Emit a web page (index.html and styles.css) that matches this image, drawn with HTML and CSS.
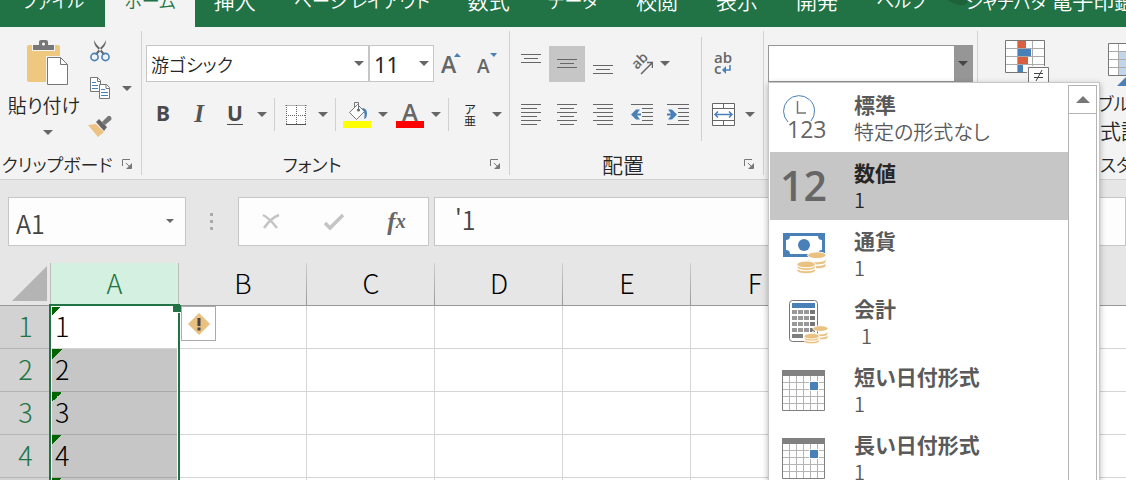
FILE: index.html
```html
<!DOCTYPE html>
<html lang="ja">
<head>
<meta charset="utf-8">
<meta name="viewport" content="width=device-width, initial-scale=1">
<title>Excel</title>
<link rel="stylesheet" href="styles.css">
</head>
<body>
<svg class="defs" aria-hidden="true">
  <symbol id="caret" viewBox="0 0 10 5"><path d="M0 0h10L5 5z" fill="currentColor"/></symbol>
  <symbol id="launcher" viewBox="0 0 10 10"><path d="M.5 7V.5H8M4 4l5 5M9.500 4.500v5h-5" fill="none" stroke="#777"/><path d="M9 5v4H5z" fill="#777"/></symbol>
  <symbol id="coins" viewBox="0 0 30 24">
    <g fill="#e9c180" stroke="#fff" stroke-width="1">
      <path d="M11 15v-4c0 5 19 5 19 0v4c0 4-19 4-19 0zM11 11V7c0 5 19 5 19 0v4c0 4-19 4-19 0z"/><ellipse cx="20.500" cy="4" rx="9.500" ry="3.500"/>
      <path d="M0 20v-4c0 5 19 5 19 0v4c0 4-19 4-19 0zM0 17v-4c0 5 19 5 19 0v4c0 4-19 4-19 0z"/><ellipse cx="9.500" cy="13.500" rx="9.500" ry="3.500"/>
    </g>
  </symbol>
  <symbol id="calendar" viewBox="0 0 44 41">
    <path d="M.5.5h42v40H.5z" fill="#fff" stroke="#808080"/>
    <path d="M7.500 5v35M14.500 5v35M21.500 5v35M28.500 5v35M35.500 5v35M1 12.500h41M1 19.500h41M1 26.500h41M1 33.500h41" stroke="#b4b4b4"/>
    <path d="M0 0h43v6H0z" fill="#808080"/><path d="M27 11h10v10H27z" fill="#fff"/><path d="M28 12h8v8h-8z" fill="#4a80b8"/>
  </symbol>
</svg>

<nav class="tabs" aria-label="リボン タブ">
  <svg class="tabs-art" viewBox="0 0 80 6" aria-hidden="true"><path d="M0 0h22c-3 6-8 6-14 4zM44 0h22c0 5-10 6-14 4z" fill="#1d623b"/></svg>
  <button class="tab kana">ファイル</button>
  <button class="tab tab-active kana">ホーム</button>
  <button class="tab">挿入</button>
  <button class="tab kana">ページ レイアウト</button>
  <button class="tab">数式</button>
  <button class="tab kana">データ</button>
  <button class="tab">校閲</button>
  <button class="tab">表示</button>
  <button class="tab">開発</button>
  <button class="tab kana">ヘルプ</button>
  <button class="tab"><span class="kana">シャチハタ</span> 電子印鑑</button>
</nav>

<div class="ribbon">
  <section class="group clipboard">
    <div class="group-body clip-body">
      <button class="paste">
        <svg class="paste-art" width="42" height="46" viewBox="0 0 42 46"><path d="M2 5h29q2 0 2 2v33q0 2-2 2H2q-2 0-2-2V7q0-2 2-2z" fill="#edc87e"/><path d="M5 4h23v7H5z" fill="#f3f3f3"/><path d="M6 5h6V2q0-2 2-2h5q2 0 2 2v3h6v5H6z" fill="#777"/><circle cx="16.500" cy="4" r="1.500" fill="#fff"/><path d="M19 16h23v30H19z" fill="#f3f3f3"/><path d="M20.500 17.500h13l7 7v20h-20z" fill="#fff" stroke="#777"/><path d="M33.500 17.500v7h7" fill="none" stroke="#777"/></svg>
        <span>貼り付け</span>
        <svg class="caret"><use href="#caret"/></svg>
      </button>
      <div class="clip-tools">
        <button class="tool" aria-label="切り取り"><svg width="20" height="22" viewBox="0 0 20 22"><path d="M4 0c0 4 1 6 5 10l4 5 2-1-5-6C7 5 5 3 4 0zM16 0c0 4-1 6-5 10l-4 5-2-1 5-6c3-3 5-5 6-8z" fill="#666"/><g fill="none" stroke="#4a80b8" stroke-width="1.600"><circle cx="4.500" cy="17" r="3.600"/><circle cx="15.500" cy="17" r="3.600"/></g></svg></button>
        <button class="tool" aria-label="コピー"><svg width="20" height="22" viewBox="0 0 20 22"><path d="M.5.5h7l3 3v11H.5z" fill="#fff" stroke="#777"/><path d="M7.500.5v4h3" fill="none" stroke="#777"/><path d="M2 5.500h4M2 8.500h6M2 11.500h6" stroke="#4a80b8"/><path d="M9.500 7.500h7l3 3v11h-10z" fill="#fff" stroke="#777"/><path d="M16 7.500v4h3.500" fill="none" stroke="#777"/><path d="M11 12.500h4M11 15.500h7M11 18.500h7" stroke="#4a80b8"/></svg></button>
        <button class="arrow" aria-label="コピーのオプション"><svg class="caret"><use href="#caret"/></svg></button>
        <button class="tool" aria-label="書式のコピー"><svg width="24" height="22" viewBox="0 0 24 22"><path d="M0 9l8-1 8 8-6 5z" fill="#edc282"/><path d="M8 6l3-3 8 8-3 4z" fill="#666"/><path d="M14 6l6-6q2-1 3 1t0 3l-6 5z" fill="#777"/></svg></button>
      </div>
    </div>
    <footer class="group-foot kana"><span>クリップボード</span><button class="launch" aria-label="クリップボードの詳細"><svg><use href="#launcher"/></svg></button></footer>
  </section>

  <section class="group font">
    <div class="group-body">
      <div class="row row-fields">
        <label class="field field-font"><select class="kana" aria-label="フォント名"><option>游ゴシック</option></select><svg class="caret"><use href="#caret"/></svg></label>
        <label class="field field-size"><select aria-label="フォント サイズ"><option>11</option></select><svg class="caret"><use href="#caret"/></svg></label>
        <button class="btn" aria-label="フォント サイズの拡大"><svg width="22" height="24" viewBox="0 0 22 24"><text x="0" y="21" class="glyph" font-size="23">A</text><path d="M13 5l3-4 4 4z" fill="#4a80b8"/></svg></button>
        <button class="btn" aria-label="フォント サイズの縮小"><svg width="22" height="24" viewBox="0 0 22 24"><text x="0" y="21" class="glyph" font-size="19">A</text><path d="M13 1h7l-3 4z" fill="#4a80b8"/></svg></button>
      </div>
      <div class="row">
        <button class="btn bold" aria-label="太字">B</button>
        <button class="btn italic" aria-label="斜体">I</button>
        <button class="btn underline" aria-label="下線">U</button>
        <button class="arrow" aria-label="下線の種類"><svg class="caret"><use href="#caret"/></svg></button>
        <i class="rule"></i>
        <button class="btn" aria-label="罫線"><svg width="22" height="22" viewBox="0 0 22 22"><path d="M1 1h20v20H1z" fill="#fff"/><path d="M.5 1.500h21M1.500 1v19M11.500 1v19M20.500 1v19M1 11.500h20" stroke="#666" stroke-dasharray="1 1"/><path d="M1 20.500h20" stroke="#555"/></svg></button>
        <button class="arrow" aria-label="罫線の種類"><svg class="caret"><use href="#caret"/></svg></button>
        <i class="rule"></i>
        <button class="btn btn-color" aria-label="塗りつぶしの色"><svg width="28" height="27" viewBox="0 0 28 27"><path d="M6.500 11.500l8-8 7 7-8 8z" fill="#fff" stroke="#777"/><path d="M11.500 7V1.500h4V9" fill="none" stroke="#777"/><circle cx="15.500" cy="9" r="1.500" fill="#666"/><path d="M20 7c4 1 5 5 3 10l-2 1c1-4 1-7-2-10z" fill="#4a80b8"/><path d="M0 20h28v7H0z" fill="#ff0"/></svg></button>
        <button class="arrow" aria-label="塗りつぶしの色の一覧"><svg class="caret"><use href="#caret"/></svg></button>
        <button class="btn btn-color" aria-label="フォントの色"><svg width="28" height="27" viewBox="0 0 28 27"><text x="14" y="20" text-anchor="middle" class="glyph" font-size="24">A</text><path d="M0 20h28v7H0z" fill="#f00"/></svg></button>
        <button class="arrow" aria-label="フォントの色の一覧"><svg class="caret"><use href="#caret"/></svg></button>
        <i class="rule"></i>
        <button class="btn phonetic" aria-label="ふりがな"><span>ア</span><span>亜</span></button>
        <button class="arrow" aria-label="ふりがなのオプション"><svg class="caret"><use href="#caret"/></svg></button>
      </div>
    </div>
    <footer class="group-foot kana"><span>フォント</span><button class="launch" aria-label="フォントの詳細"><svg><use href="#launcher"/></svg></button></footer>
  </section>

  <section class="group align">
    <div class="group-body align-body">
      <div class="align-main">
        <div class="row">
          <button class="btn" aria-label="上揃え"><svg class="lines"><path d="M1 2.500h20M4 6.500h14M1 10.500h20"/></svg></button>
          <button class="btn btn-on" aria-label="上下中央揃え" aria-pressed="true"><svg class="lines"><path d="M1 7.500h20M4 11.500h14M1 15.500h20"/></svg></button>
          <button class="btn" aria-label="下揃え"><svg class="lines"><path d="M1 13.500h20M4 17.500h14M1 21.500h20"/></svg></button>
          <button class="btn btn-gap" aria-label="方向"><svg width="22" height="22" viewBox="0 0 22 22"><text x="6" y="17" transform="rotate(-45 6 17)" class="glyph" font-size="14">ab</text><path d="M10 21L21 10M16 9.500h5.500V15" fill="none" stroke="#666" stroke-width="1.500"/></svg></button>
          <button class="arrow arrow-narrow" aria-label="方向の一覧"><svg class="caret"><use href="#caret"/></svg></button>
        </div>
        <div class="row">
          <button class="btn" aria-label="左揃え"><svg class="lines"><path d="M1 1.500h20M1 5.500h16M1 9.500h20M1 13.500h16M1 17.500h20M1 21.500h16"/></svg></button>
          <button class="btn" aria-label="中央揃え"><svg class="lines"><path d="M1 1.500h20M4 5.500h14M1 9.500h20M4 13.500h14M1 17.500h20M4 21.500h14"/></svg></button>
          <button class="btn" aria-label="右揃え"><svg class="lines"><path d="M1 1.500h20M5 5.500h16M1 9.500h20M5 13.500h16M1 17.500h20M5 21.500h16"/></svg></button>
          <button class="btn btn-gap" aria-label="インデントを減らす"><svg class="lines"><path d="M0 1.500h22M11 5.500h11M11 9.500h11M11 13.500h11M11 17.500h11M0 21.500h22"/><path class="blue" d="M0 11.500l5-5h4l-3 4h4v2H6l3 4H5z"/></svg></button>
          <button class="btn" aria-label="インデントを増やす"><svg class="lines"><path d="M0 1.500h22M11 5.500h11M11 9.500h11M11 13.500h11M11 17.500h11M0 21.500h22"/><path class="blue" d="M10 11.500l-5-5H1l3 4H0v2h4l-3 4h4z"/></svg></button>
        </div>
      </div>
      <i class="rule rule-tall"></i>
      <div class="align-side">
        <div class="row"><button class="btn" aria-label="折り返して全体を表示する"><svg width="20" height="24" viewBox="0 0 20 24"><text x="1" y="11" class="glyph" font-size="15">ab</text><text x="1" y="22" class="glyph" font-size="15">c</text><path d="M17 13v5h-6" fill="none" stroke="#4a80b8" stroke-width="1.500"/><path d="M9 18l4-4v8z" fill="#4a80b8"/></svg></button></div>
        <div class="row">
          <button class="btn" aria-label="セルを結合して中央揃え"><svg width="23" height="23" viewBox="0 0 23 23"><path d="M.5.5h22v22H.5zM.5 5.500h22M.5 17.500h22M11.500 0v5M11.500 18v5" fill="#fff" stroke="#666"/><path d="M3 11.500h17M6 8.500l-3 3 3 3M17 8.500l3 3-3 3" fill="none" stroke="#4a80b8" stroke-width="1.500"/></svg></button>
          <button class="arrow" aria-label="セル結合の一覧"><svg class="caret"><use href="#caret"/></svg></button>
        </div>
      </div>
    </div>
    <footer class="group-foot"><span>配置</span><button class="launch" aria-label="配置の詳細"><svg><use href="#launcher"/></svg></button></footer>
  </section>

  <section class="group number">
    <div class="group-body">
      <div class="combo">
        <input type="text" aria-label="表示形式" role="combobox" aria-expanded="true" aria-controls="formats">
        <button class="combo-open" aria-label="表示形式の一覧"><svg class="caret"><use href="#caret"/></svg></button>
        <div class="menu">
          <div class="menu-items" id="formats" role="listbox">
            <button class="item" role="option"><svg width="46" height="46" viewBox="0 0 46 46"><path d="M6 27A15.500 15.500 0 1 1 29 26" fill="none" stroke="#4a80b8"/><path d="M15.500 6v12H24" fill="none" stroke="#777" stroke-width="1.500"/><text x="5" y="43" class="glyph thin" font-size="23">123</text></svg><span class="name">標準</span><span class="sample">特定の形式なし</span></button>
            <button class="item item-on" role="option" aria-selected="true"><svg width="46" height="46" viewBox="0 0 46 46"><text x="-2" y="38" class="glyph" font-size="41">12</text></svg><span class="name">数値</span><span class="sample">1</span></button>
            <button class="item" role="option"><svg width="46" height="46" viewBox="0 0 46 46"><path d="M1 2h42v24H1z" fill="#4a80b8"/><path d="M8 5h28q0 4 4 4v10q-4 0-4 4H8q0-4-4-4V9q4 0 4-4z" fill="#fff"/><circle cx="22" cy="14" r="6" fill="#4a80b8"/><use href="#coins" x="15" y="20" width="29" height="24"/></svg><span class="name">通貨</span><span class="sample">1</span></button>
            <button class="item" role="option"><svg width="46" height="46" viewBox="0 0 46 46"><rect x="7.500" y="1.500" width="28" height="41" rx="3" fill="#fff" stroke="#777"/><path d="M10 4h23v5H10z" fill="#4a80b8"/><path d="M10 13h23M10 19h23M10 25h23M10 31h23" stroke="#999" stroke-width="4" stroke-dasharray="5 1"/><path d="M28 13h5M28 19h5M28 25h5M28 31h5" stroke="#777" stroke-width="4"/><path d="M10 35h11v4H10z" fill="#808080"/><use href="#coins" x="22" y="26" width="24" height="20"/></svg><span class="name">会計</span><span class="sample sample-inset">1</span></button>
            <button class="item" role="option"><svg width="44" height="41"><use href="#calendar"/></svg><span class="name">短い日付形式</span><span class="sample">1</span></button>
            <button class="item" role="option"><svg width="44" height="41"><use href="#calendar"/></svg><span class="name">長い日付形式</span><span class="sample">1</span></button>
          </div>
          <div class="scroll"><button class="scroll-up" aria-label="上へスクロール"><svg width="14" height="7" viewBox="0 0 14 7"><path d="M0 7l7-7 7 7z" fill="#777"/></svg></button></div>
        </div>
      </div>
    </div>
  </section>

  <section class="group styles">
    <div class="group-body styles-body">
      <button class="big big-cond" aria-label="条件付き書式"><svg width="45" height="46" viewBox="0 0 45 46"><path d="M.5.5h39v32H.5z" fill="#fff" stroke="#777"/><path d="M12.500 1v31M27.500 1v31M1 8.500h38M1 16.500h38M1 24.500h38" stroke="#aaa"/><path d="M13 1h8v7h-8zM13 17h10v7H13z" fill="#d9603f"/><path d="M13 9h13v7H13zM13 25h5v7h-5z" fill="#4a80b8"/><path d="M22 26h23v20H22z" fill="#f3f3f3"/><path d="M23.500 27.500h20v18h-20z" fill="#fff" stroke="#777"/><path d="M29 33.500h9M29 37.500h9M37 30l-6 11" stroke="#444"/></svg></button>
      <button class="big big-table"><svg width="45" height="46" viewBox="0 0 45 46"><path d="M.5 3.500h39v32H.5z" fill="#fff" stroke="#777"/><path d="M11 12h28v23H11z" fill="#c2d5ea"/><path d="M10.500 4v31M24.500 4v31M1 11.500h38M1 19.500h38M1 27.500h38" stroke="#aaa"/><path d="M9 46l14-14 8 14z" fill="#4a80b8"/></svg><span class="kana">テーブルとして</span><span>書式設定</span></button>
    </div>
    <footer class="group-foot kana"><span>スタイル</span></footer>
  </section>
</div>

<div class="formula-bar">
  <label class="name-box"><input type="text" value="A1" aria-label="名前ボックス"><svg class="caret"><use href="#caret"/></svg></label>
  <svg class="dots" width="3" height="17" viewBox="0 0 3 17"><path d="M0 0h3v3H0zM0 7h3v3H0zM0 14h3v3H0z" fill="#aaa"/></svg>
  <div class="edit-tools">
    <button aria-label="キャンセル"><svg width="18" height="17" viewBox="0 0 18 17"><path d="M1 2q6 3 14 13M17 2Q9 5 2 15" fill="none" stroke="#c4c4c4" stroke-width="2.500"/></svg></button>
    <button aria-label="入力"><svg width="20" height="18" viewBox="0 0 20 18"><path d="M1 10l5 5L19 2" fill="none" stroke="#c4c4c4" stroke-width="3.500"/></svg></button>
    <button class="fx" aria-label="関数の挿入">f<small>x</small></button>
  </div>
  <input class="formula" type="text" value="'1" aria-label="数式バー">
</div>

<main class="sheet">
  <table>
    <colgroup><col class="col-head"><col span="8" class="col-cell"><col></colgroup>
    <thead><tr><th class="corner"><svg width="35" height="35" viewBox="0 0 35 35"><path d="M35 0v35H0z" fill="#b4b4b4"/></svg></th><th class="on">A</th><th>B</th><th>C</th><th>D</th><th>E</th><th>F</th><th>G</th><th>H</th><th class="rest"></th></tr></thead>
    <tbody>
      <tr><th>1</th><td class="flag">1</td><td></td><td></td><td></td><td></td><td></td><td></td><td></td><td class="rest"></td></tr>
      <tr><th>2</th><td class="flag picked">2</td><td></td><td></td><td></td><td></td><td></td><td></td><td></td><td class="rest"></td></tr>
      <tr><th>3</th><td class="flag picked">3</td><td></td><td></td><td></td><td></td><td></td><td></td><td></td><td class="rest"></td></tr>
      <tr><th>4</th><td class="flag picked">4</td><td></td><td></td><td></td><td></td><td></td><td></td><td></td><td class="rest"></td></tr>
      <tr><th></th><td class="flag picked"></td><td></td><td></td><td></td><td></td><td></td><td></td><td></td><td class="rest"></td></tr>
    </tbody>
  </table>
  <div class="selection"><i class="handle"></i></div>
  <button class="warn" aria-label="エラー チェック オプション"><svg width="22" height="22" viewBox="0 0 22 22"><path d="M11 0l11 11-11 11L0 11z" fill="#e8c080"/><path d="M9.500 5h3v8h-3zM9.500 14.500h3v3h-3z" fill="#444"/></svg></button>
</main>
</body>
</html>
```

FILE: styles.css
```css
* { box-sizing: border-box; }

html, body { height: 100%; }

body {
  margin: 0;
  display: flex;
  flex-direction: column;
  overflow: hidden;
  background: #fff;
  color: #262626;
  font-family: "Noto Sans CJK JP", "Noto Sans", sans-serif;
  font-size: 21px;
  font-weight: 350;
  font-feature-settings: "palt";
}

button, input, select {
  margin: 0;
  padding: 0;
  border: 0;
  background: none;
  color: inherit;
  font: inherit;
  font-feature-settings: inherit;
}

button { display: flex; align-items: center; justify-content: center; }

svg { display: block; flex: none; }

.defs { position: absolute; width: 0; height: 0; }
.caret { width: 10px; height: 5px; color: #666; }
.glyph { font-family: "Open Sans", "Noto Sans", sans-serif; font-weight: 600; fill: #666; }
.thin { font-weight: 500; }
.kana { font-size: 18px; }

/* Tabs */
.tabs {
  position: relative;
  flex: none;
  display: flex;
  align-items: flex-end;
  height: 27px;
  overflow: hidden;
  background: #217346;
  color: #fff;
}
.tabs-art { position: absolute; top: 0; left: 947px; width: 80px; height: 6px; }
.tab {
  position: relative;
  flex: none;
  display: block;
  height: 42px;
  padding: 0 19px 12px;
  line-height: 30px;
  white-space: nowrap;
}
.tab:nth-of-type(1) { padding-left: 22px; padding-right: 21px; }
.tab-active { background: #f3f3f3; color: #217346; }

/* Ribbon */
.ribbon {
  position: relative;
  z-index: 2;
  flex: none;
  display: flex;
  padding: 4px 0;
  background: #f3f3f3;
  border-bottom: 1px solid #d0d0d0;
}
.group {
  flex: none;
  display: flex;
  flex-direction: column;
  border-right: 1px solid #d2d2d2;
}
.clipboard { width: 142px; }
.font { width: 368px; }
.align { width: 254px; }
.number { width: 214px; }
.styles { flex: 1; min-width: 0; overflow: hidden; border-right: 0; }

.group-body {
  height: 122px;
  padding: 14px 3px 0;
  display: flex;
  flex-direction: column;
  gap: 14px;
}
.group-foot {
  display: flex;
  align-items: center;
  height: 22px;
  padding-right: 9px;
  line-height: 22px;
  white-space: nowrap;
}
.group-foot span { flex: 1; padding-right: 8px; text-align: center; }
.launch svg { width: 10px; height: 10px; }

.row { display: flex; align-items: center; height: 37px; }
.btn { width: 36px; height: 36px; flex: none; }
.btn-on { background: #c6c6c6; }
.btn-color { width: 35px; }
.btn-gap { margin-left: 3px; }
.arrow { width: 18px; height: 36px; flex: none; }
.arrow-narrow { width: 10px; }
.rule { width: 1px; height: 33px; margin: 0 3px; background: #d0d0d0; }

.clip-body { flex-direction: row; gap: 0; padding: 9px 0 0 6px; }
.paste { width: 76px; height: 106px; flex-direction: column; justify-content: flex-start; font-size: 19px; white-space: nowrap; }
.paste span { line-height: 38px; }
.paste .caret { margin: 6px 0 0 7px; }
.paste .paste-art { margin-left: 7px; }
.clip-tools {
  flex: 1;
  display: grid;
  grid-template-columns: 36px 18px;
  grid-template-rows: 22px 52px 26px;
  align-items: center;
}
.clip-tools .tool { grid-column: 1; }

.field { position: relative; display: block; height: 37px; background: #fff; border: 1px solid #c6c6c6; }
.field select { appearance: none; width: 100%; height: 100%; padding: 0 20px 0 4px; outline: 0; }
.field .caret { position: absolute; right: 4px; top: 15px; }
.row-fields { padding-left: 1px; }
.field-font { width: 223px; }
.field-size { width: 65px; }
.field-size select { font-family: "Noto Sans", sans-serif; font-size: 22px; font-weight: 400; }

.bold, .underline { font-family: "Noto Sans", sans-serif; font-size: 21px; line-height: 28px; font-weight: 700; color: #4a4a4a; padding-bottom: 4px; }
.italic { font-family: "Liberation Serif", serif; font-size: 25px; line-height: 28px; font-weight: 700; font-style: italic; color: #555; padding-bottom: 2px; }
.underline { text-decoration: underline; text-decoration-thickness: 1px; text-underline-offset: 3px; }
.phonetic { flex-direction: column; font-size: 12px; line-height: 12px; font-weight: 400; }

.align-body { flex-direction: row; gap: 0; }
.align-main { width: 188px; display: flex; flex-direction: column; gap: 14px; }
.align-side { display: flex; flex-direction: column; gap: 14px; }
.rule-tall { height: 104px; margin: -8px 3px 0 0; align-self: flex-start; }
.lines { width: 22px; height: 24px; fill: none; stroke: #666; }
.lines .blue { fill: #4a80b8; stroke: none; }

/* Number format combo */
.number .group-body { padding-left: 4px; padding-right: 4px; }
.combo { position: relative; display: flex; height: 37px; border: 1px solid #969696; background: #fff; }
.combo input { flex: 1; min-width: 0; padding: 0 4px; outline: 0; }
.combo-open { width: 18px; background: #969696; }
.combo-open .caret { color: #444; }
.menu {
  position: absolute;
  top: 36px;
  left: -1px;
  width: 332px;
  display: flex;
  padding: 1px 2px 0 1px;
  background: #fff;
  border: 1px solid #c6c6c6;
  box-shadow: 0 2px 6px rgba(0, 0, 0, .3);
}
.menu-items { flex: 1; }
.item {
  width: 100%;
  height: 68px;
  padding: 6px 0 6px 12px;
  display: grid;
  grid-template-columns: 72px 1fr;
  grid-template-rows: 28px 28px;
  align-items: center;
  justify-items: start;
  line-height: 28px;
  color: #5a5a5a;
  white-space: nowrap;
}
.item svg { grid-row: 1 / 3; }
.item .name { font-weight: 700; }
.item .sample { grid-column: 2; font-size: 20px; }
.item .sample-inset { padding-left: 7px; }
.item-on { background: #c6c6c6; color: #262626; }
.scroll { width: 29px; margin-top: 1px; border: 1px solid #b4b4b4; }
.scroll-up { width: 100%; height: 28px; border-bottom: 1px solid #b4b4b4; }

/* Styles group */
.styles-body { flex-direction: row; gap: 0; padding: 9px 0 0 14px; }
.big { flex: none; width: 118px; flex-direction: column; justify-content: flex-start; line-height: 27px; white-space: nowrap; }
.big-cond { width: 70px; }
.big-table svg { margin: 0 0 4px 19px; }
.styles .group-foot span { padding-left: 122px; text-align: left; }

/* Formula bar */
.formula-bar {
  flex: none;
  display: flex;
  align-items: center;
  padding: 17px 0 17px 8px;
  background: #e6e6e6;
  font-size: 25px;
  color: #444;
}
.name-box, .edit-tools, .formula { height: 49px; background: #fdfdfd; border: 1px solid #c6c6c6; }
.name-box { position: relative; width: 178px; }
.name-box input { width: 100%; height: 100%; padding: 2px 24px 0 7px; outline: 0; }
.name-box .caret { position: absolute; right: 11px; top: 21px; width: 8px; height: 4px; }
.dots { margin: 0 25px 0 24px; }
.edit-tools { display: flex; width: 191px; margin-right: 5px; }
.edit-tools button { flex: 1; }
.fx { font-family: "Liberation Serif", serif; font-style: italic; font-weight: 700; color: #666; }
.fx small { font-size: 20px; }
.formula { flex: 1; min-width: 0; padding: 0 20px 6px; outline: 0; }

/* Sheet */
.sheet { position: relative; flex: 1; min-height: 0; overflow: hidden; }
table { width: 100%; table-layout: fixed; border-collapse: separate; border-spacing: 0; font-size: 27px; line-height: 36px; color: #000; }
.col-head { width: 51px; }
.col-cell { width: 128px; }
th, td { height: 43px; padding: 0 0 2px; font-weight: 300; }
td { border-right: 1px solid #d4d4d4; border-bottom: 1px solid #d4d4d4; }
thead th {
  border-bottom: 1px solid #999;
  background: linear-gradient(#d0d0d0, #999) right / 1px 100% no-repeat #e6e6e6;
}
thead .on { background: #d3f0e0; color: #217346; border-right: 1px solid #bbb; }
thead .corner { padding-left: 12px; background: #e6e6e6; border-right: 1px solid #bbb; }
thead .rest { background: #e6e6e6; }
td.rest { border-right: 0; }
tbody th { background: #d2d2d2; color: #217346; border-bottom: 1px solid #b4b4b4; }
.flag {
  padding-left: 4px;
  background: linear-gradient(135deg, #006400 50%, transparent 50%) 1px 0 / 10px 10px no-repeat;
}
.picked { background-color: #c6c6c6; border-bottom-color: #aaa; }
.selection {
  position: absolute;
  top: 41px;
  left: 49px;
  width: 131px;
  bottom: -10px;
  border: 2px solid #217346;
  box-shadow: inset 0 0 0 1px #fff;
  pointer-events: none;
}
.handle { position: absolute; top: -1px; right: -3px; width: 8px; height: 8px; background: #217346; border-bottom: 1px solid #fff; }
.warn { position: absolute; top: 43px; left: 181px; width: 35px; height: 35px; background: #fff; border: 1px solid #ababab; }
```
